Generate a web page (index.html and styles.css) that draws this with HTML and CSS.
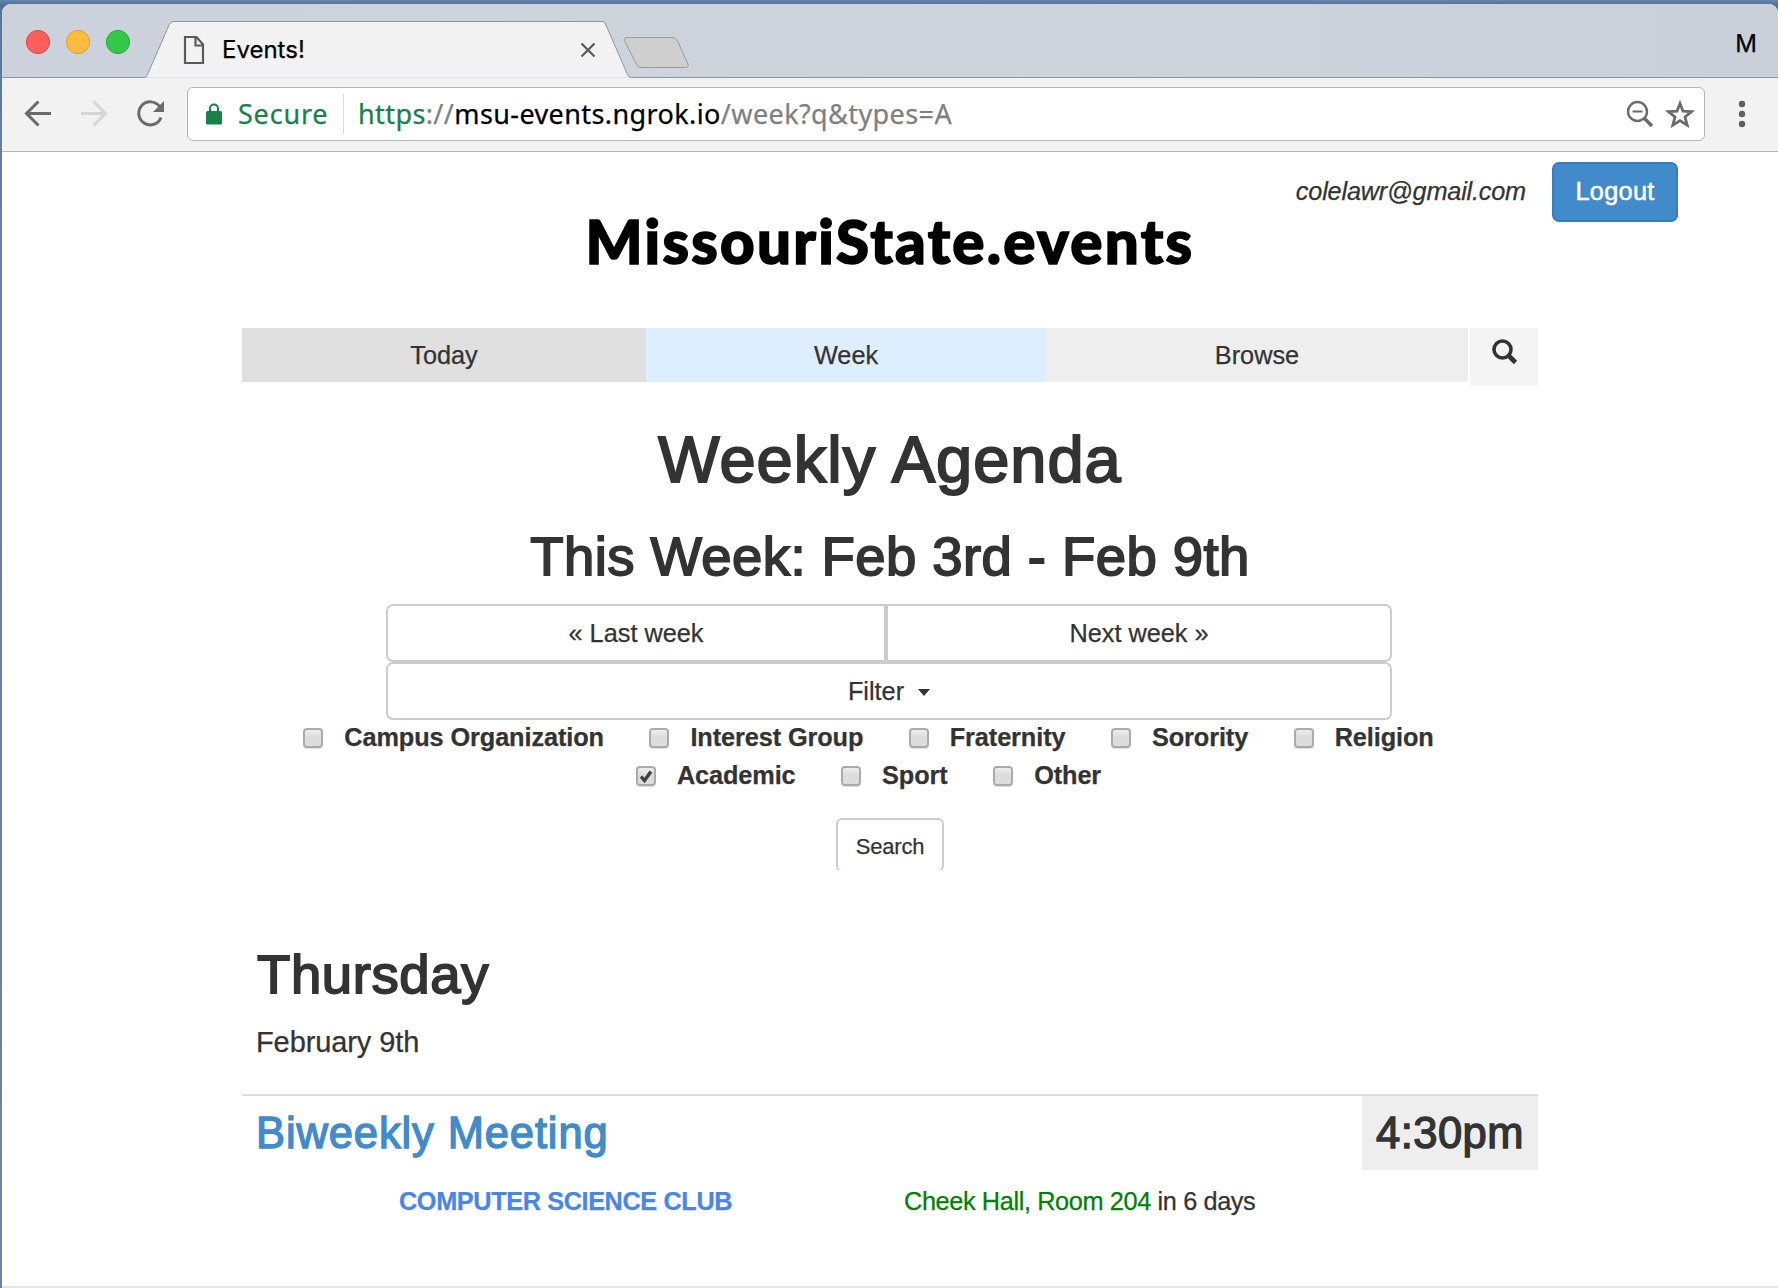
FILE: index.html
```html
<!DOCTYPE html>
<html lang="en">
<head>
<meta charset="utf-8">
<title>Events!</title>
<link rel="stylesheet" href="styles.css">
</head>
<body>
<div class="window">
  <div class="tabstrip">
    <svg class="strip-art" width="1776" height="74" viewBox="2 4 1776 74">
      <path d="M2 77.5H144Q146.500 77.500 147.500 74.500L169.500 24Q171 21.500 174 21.500H602Q604.500 21.500 605.500 24L627.500 74.500Q629 77.500 631 77.500H1778" fill="#f2f2f2" stroke="#91959b"/>
      <path d="M627 37.500H672Q676 37.500 677.500 41L688 64Q689 67.500 685.500 67.500H641Q638 67.500 636.500 64.500L624.500 40.500Q623.500 37.500 627 37.500Z" fill="#cfcfcf" stroke="#999b9f"/>
      <circle cx="38" cy="42" r="11.600" fill="#fc605c" stroke="#df4744"/>
      <circle cx="78" cy="42" r="11.600" fill="#fdbc40" stroke="#de9f34"/>
      <circle cx="118" cy="42" r="11.600" fill="#34c84a" stroke="#27aa35"/>
      <path d="M185 37H196.500L203 44.500V63H185ZM195.500 37V45.500H203" fill="none" stroke="#5a5a5a" stroke-width="2.200"/>
      <path d="M581.500 43.500L594.500 56.500M594.500 43.500L581.500 56.500" stroke="#5a5a5a" stroke-width="2.200"/>
    </svg>
    <div class="tab-title">Events!</div>
    <div class="profile">M</div>
  </div>
  <div class="toolbar">
    <svg class="nav-icons" width="145" height="32" viewBox="24 98 145 32" fill="none" stroke-width="3">
      <path d="M51 113.500H27M38.500 101.500L26.500 113.500L38.500 125.500" stroke="#6b6b6b"/>
      <path d="M81 113.500H105M93.500 101.500L105.500 113.500L93.500 125.500" stroke="#d5d5d5"/>
      <path d="M159.500 106.500A11.500 11.500 0 1 0 161 117.500" stroke="#6b6b6b"/>
      <path d="M164 101V112H153Z" fill="#6b6b6b"/>
    </svg>
    <div class="omnibox">
      <svg class="lock" width="16" height="22" viewBox="0 0 16 22"><rect y="8" width="16" height="13.500" rx="1.500" fill="#188048"/><path d="M4 9V5.500a4 4 0 0 1 8 0V9" fill="none" stroke="#188048" stroke-width="2"/></svg>
      <span class="secure">Secure</span>
      <span class="divider"></span>
      <span class="url"><span class="scheme">https</span><span class="dim">://</span>msu-events.ngrok.io<span class="dim">/week?q&amp;types=A</span></span>
      <svg class="box-icons" width="72" height="32" viewBox="1625 98 72 32" fill="none" stroke="#6b6b6b">
        <circle cx="1637.500" cy="111.500" r="9.500" stroke-width="2.400"/><path d="M1632.500 111.500H1642.500" stroke-width="2"/><path d="M1644.500 118.500L1652 126" stroke-width="3.500"/>
        <path d="M1680 103.500L1683 111.200L1691.500 111.700L1685 117L1687.200 125.200L1680 120.600L1672.800 125.200L1675 117L1668.500 111.700L1677 111.200Z" stroke-width="2.800"/>
      </svg>
    </div>
    <svg class="menu" width="8" height="28" viewBox="0 0 8 28" fill="#5f5f5f"><circle cx="4" cy="4" r="3.200"/><circle cx="4" cy="14" r="3.200"/><circle cx="4" cy="24" r="3.200"/></svg>
  </div>

  <div class="page">
    <div class="account"><em class="email">colelawr@gmail.com</em><a class="logout">Logout</a></div>
    <div class="brand">MissouriState.events</div>
    <main class="container">
      <nav class="nav">
        <a class="today">Today</a><a class="week">Week</a><a class="browse">Browse</a>
        <a class="find"><svg width="26" height="26" viewBox="0 0 26 26" fill="none" stroke="#333"><circle cx="10.500" cy="10.500" r="8.500" stroke-width="3.600"/><path d="M16.500 16.500L23.500 23.500" stroke-width="4.600"/></svg></a>
      </nav>
      <h1>Weekly Agenda</h1>
      <h2 class="range">This Week: Feb 3rd - Feb 9th</h2>
      <div class="controls">
        <div class="pager"><a class="btn prev">« Last week</a><a class="btn next">Next week »</a></div>
        <a class="btn filter">Filter<span class="caret"></span></a>
      </div>
      <form class="types">
        <div class="type-row">
          <label><i class="box"></i>Campus Organization</label><label><i class="box"></i>Interest Group</label><label><i class="box"></i>Fraternity</label><label><i class="box"></i>Sorority</label><label><i class="box"></i>Religion</label>
        </div>
        <div class="type-row">
          <label><i class="box"><svg width="16" height="16" viewBox="0 0 16 16"><path d="M3 8.500L6.500 12.500L13 3.500" fill="none" stroke="#404040" stroke-width="3.400"/></svg></i>Academic</label><label><i class="box"></i>Sport</label><label><i class="box"></i>Other</label>
        </div>
        <div class="submit"><a class="search-btn">Search</a></div>
      </form>
      <section class="day">
        <h2 class="day-name">Thursday</h2>
        <p class="date">February 9th</p>
        <article class="event">
          <div class="event-head"><h3 class="event-title">Biweekly Meeting</h3><div class="time">4:30pm</div></div>
          <div class="event-meta"><strong class="club">COMPUTER SCIENCE CLUB</strong><span class="where"><span class="place">Cheek Hall, Room 204</span> in 6 days</span></div>
        </article>
      </section>
    </main>
    <div class="footer-rule"></div>
  </div>
</div>
</body>
</html>
```
FILE: styles.css
```css
* { box-sizing: border-box; }
body {
  margin: 0;
  height: 1288px;
  padding: 4px 0 0 2px;
  overflow: hidden;
  background: linear-gradient(#6586ad 0, #55739a 4px, #687da0 140px, #70839f);
  font-family: "Liberation Sans", Arial, sans-serif;
  font-size: 25.3px;
  color: #333;
  -webkit-text-stroke-width: .25px;
}
h1, h2, h3, p { margin: 0; font-weight: 400; white-space: nowrap; }
.window {
  height: 1284px;
  border-radius: 9px 9px 0 0;
  overflow: hidden;
  background: #fff;
}

/* browser chrome */
.tabstrip {
  position: relative;
  height: 74px;
  display: flex;
  justify-content: space-between;
  padding: 0 21px 0 220px;
  background: linear-gradient(90deg, #cbd2db, #cdd4db 60%, #c9d0da);
  font-family: Inter, sans-serif;
  color: #000;
}
.strip-art { position: absolute; left: 0; top: 0; }
.tab-title { position: relative; font-size: 24px; line-height: 30px; padding-top: 31px; }
.profile { font-size: 24px; line-height: 30px; padding-top: 25px; }
.toolbar {
  height: 74px;
  display: flex;
  align-items: center;
  padding: 0 32px 2px 22px;
  background: #f2f2f2;
  border-bottom: 1px solid #b5b5b5;
}
.nav-icons { flex: none; }
.omnibox {
  width: 1518px;
  height: 54px;
  margin-left: 18px;
  margin-right: 33px;
  padding: 0 7px 0 18px;
  display: flex;
  align-items: center;
  flex: none;
  border: 1px solid #b5b5b5;
  border-radius: 6px;
  background: #fff;
  font-family: "Noto Sans", sans-serif;
  font-size: 27px;
}
.secure { margin-left: 16px; width: 90px; letter-spacing: .8px; color: #188048; }
.divider { width: 1px; height: 40px; margin: 0 14px 0 15px; background: #ddd; }
.url { color: #000; white-space: nowrap; flex: 1; letter-spacing: .4px; }
.scheme { color: #188048; }
.dim { color: #808080; }

/* page header */
.account {
  height: 70px;
  padding: 10px 100px 0 0;
  display: flex;
  justify-content: flex-end;
  align-items: center;
}
.email { margin-right: 26px; padding-bottom: 2px; letter-spacing: -.2px; }
.logout {
  width: 126px;
  height: 60px;
  border: 2px solid #357ebd;
  border-radius: 7px;
  background: #428bca;
  color: #fff;
  line-height: 55px;
  letter-spacing: .3px;
  text-align: center;
  -webkit-text-stroke: .5px #fff;
}
.brand {
  height: 60px;
  margin: -12px 0 58px;
  text-align: center;
  font-family: Lato, sans-serif;
  font-weight: 900;
  font-size: 60px;
  line-height: 62px;
  letter-spacing: 2.3px;
  -webkit-text-stroke: 1.6px #000;
  color: #000;
}
.container { width: 1296px; margin-left: 240px; }
.nav { display: flex; height: 58px; }
.nav a { height: 54px; line-height: 54px; text-align: center; }
.today { width: 404px; background: #e0e0e0; }
.week { width: 400px; background: #def; }
.browse { width: 422px; background: #eee; }
.nav .find { width: 68px; height: 58px; margin-left: 2px; padding: 11px 0 0 2px; background: #f5f5f5; line-height: 0; }
h1 {
  height: 64px;
  margin-top: 42px;
  font-size: 65px;
  line-height: 64px;
  letter-spacing: 1px;
  text-align: center;
  -webkit-text-stroke: 2px #333;
}
.range, .day-name { height: 54px; font-size: 54.500px; line-height: 54px; -webkit-text-stroke: 1.8px #333; letter-spacing: .42px; }
.range { margin-top: 38px; text-align: center; }

/* week controls */
.controls { width: 1006px; margin: 20px auto 0 144px; }
.pager { display: flex; }
.btn {
  display: flex;
  justify-content: center;
  align-items: center;
  height: 58px;
  border: 2px solid #ccc;
  border-radius: 7px;
}
.prev { width: 500px; border-radius: 7px 0 0 7px; }
.next { width: 506px; border-radius: 0 7px 7px 0; }
.caret { margin: 3px 0 0 14px; border: 6px solid transparent; border-top: 7px solid #333; border-bottom: 0; }

/* type filters */
.types { margin-top: -2px; }
.type-row { display: flex; height: 38px; gap: 45.500px; justify-content: center; padding-right: 43px; }
.type-row label { display: flex; align-items: center; font-weight: 700; letter-spacing: -.1px; white-space: nowrap; }
.box {
  width: 20px;
  height: 20px;
  margin: 2px 21px 0 0;
  border: 2px solid #ababab;
  border-radius: 4px;
  background: linear-gradient(#eee, #dcdcdc 45%, #ddd);
  box-shadow: 0 1px 1px #ddd;
}
.box svg { display: block; }
.submit { height: 52px; margin-top: 24px; overflow: hidden; }
.search-btn {
  display: block;
  width: 108px;
  height: 54px;
  margin: 0 auto;
  border: 2px solid #ccc;
  border-radius: 6px;
  font-size: 22px;
  line-height: 53px;
  letter-spacing: -.2px;
  text-align: center;
}

/* agenda */
.day-name { margin-top: 78px; padding-left: 15px; letter-spacing: .6px; }
.date { height: 40px; margin-top: 20px; padding-left: 14px; font-size: 29px; line-height: 40px; letter-spacing: -.1px; }
.event { margin-top: 32px; border-top: 2px solid #ddd; }
.event-head { display: flex; justify-content: space-between; height: 74px; line-height: 74px; font-size: 43.500px; }
.event-title { padding-left: 14px; font-size: inherit; letter-spacing: .88px; color: #428bca; -webkit-text-stroke: 1.4px #428bca; }
.time { width: 176px; background: #eee; text-align: center; letter-spacing: .5px; -webkit-text-stroke: 1.4px #333; }
.event-meta { display: flex; height: 40px; margin-top: 11px; line-height: 40px; padding-left: 157px; }
.club { width: 505px; letter-spacing: -.4px; color: #4a86e8; }
.where { letter-spacing: -.38px; }
.place { color: green; }
.footer-rule { height: 2px; margin-top: 65px; background: #e4e4e4; }
```
